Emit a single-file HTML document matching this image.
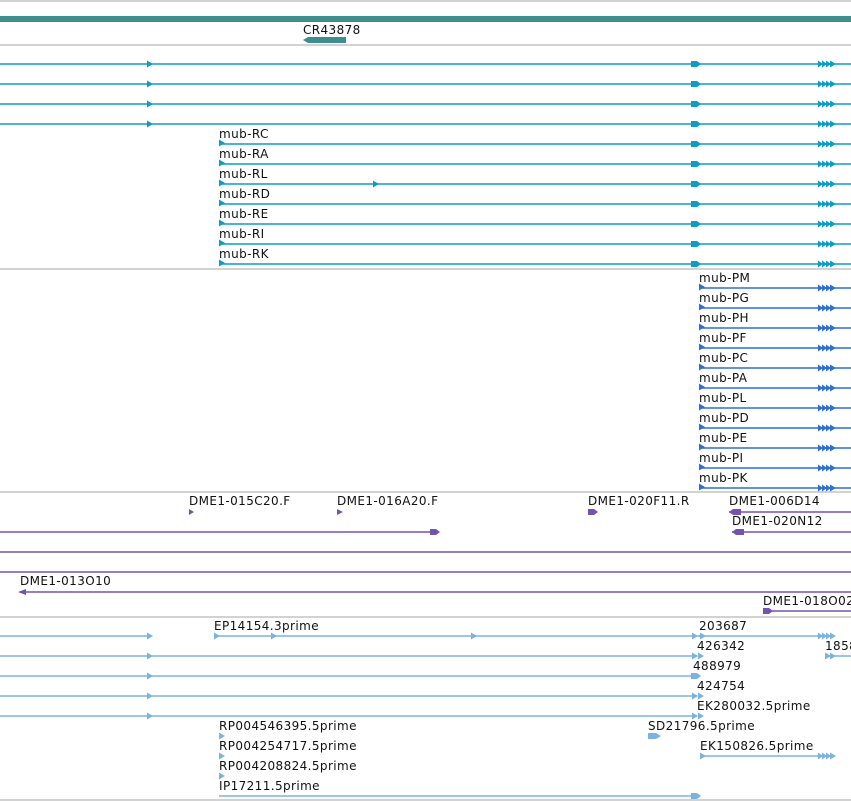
<!DOCTYPE html>
<html><head><meta charset="utf-8"><style>
html,body{margin:0;padding:0;background:#fff;width:851px;height:801px;overflow:hidden}
svg{display:block}
text{font-family:"DejaVu Sans","Liberation Sans",sans-serif;font-size:12px;fill:#111;letter-spacing:0.4px}
</style></head><body>
<svg width="851" height="801" viewBox="0 0 851 801" xmlns="http://www.w3.org/2000/svg">
<defs>
<path id="a" d="M0,-3.5L6,0L0,3.5Z"/>
<g id="ex"><rect x="0" y="-3" width="6" height="6"/><path d="M6,-3L10,0L6,3Z"/></g>
<g id="mu"><path d="M0,-3.5L5,0L0,3.5ZM4,-3.5L9,0L4,3.5ZM8,-3.5L13,0L8,3.5ZM12,-3.5L18,0L12,3.5Z"/></g>
</defs>
<g stroke="#c4c4c4" stroke-width="1.5">
<line x1="0" y1="1" x2="851" y2="1"/><line x1="0" y1="45" x2="851" y2="45"/>
<line x1="0" y1="269" x2="851" y2="269"/><line x1="0" y1="492" x2="851" y2="492"/>
<line x1="0" y1="617" x2="851" y2="617"/><line x1="0" y1="800" x2="851" y2="800"/>
</g>
<rect x="0" y="16" width="851" height="6" fill="#3f8e8e"/>
<text x="303" y="34">CR43878</text>
<path d="M303,40L308,37H346V43H308Z" fill="#3f8e8e"/>

<g fill="#0f9cc4" stroke="#0f9cc4">
<g stroke-width="1.5">
<line x1="0" y1="64" x2="851" y2="64"/><line x1="0" y1="84" x2="851" y2="84"/>
<line x1="0" y1="104" x2="851" y2="104"/><line x1="0" y1="124" x2="851" y2="124"/>
<line x1="219" y1="144" x2="851" y2="144"/><line x1="219" y1="164" x2="851" y2="164"/>
<line x1="219" y1="184" x2="851" y2="184"/><line x1="219" y1="204" x2="851" y2="204"/>
<line x1="219" y1="224" x2="851" y2="224"/><line x1="219" y1="244" x2="851" y2="244"/>
<line x1="219" y1="264" x2="851" y2="264"/>
</g>
<g stroke="none">
<use href="#a" x="147" y="64"/><use href="#a" x="147" y="84"/><use href="#a" x="147" y="104"/><use href="#a" x="147" y="124"/>
<use href="#a" x="373" y="184"/>
<use href="#a" x="219" y="143"/><use href="#a" x="219" y="163"/><use href="#a" x="219" y="183"/><use href="#a" x="219" y="203"/><use href="#a" x="219" y="223"/><use href="#a" x="219" y="243"/><use href="#a" x="219" y="263"/>
<use href="#ex" x="691" y="64"/><use href="#ex" x="691" y="84"/><use href="#ex" x="691" y="104"/><use href="#ex" x="691" y="124"/>
<use href="#ex" x="691" y="144"/><use href="#ex" x="691" y="164"/><use href="#ex" x="691" y="184"/><use href="#ex" x="691" y="204"/><use href="#ex" x="691" y="224"/><use href="#ex" x="691" y="244"/><use href="#ex" x="691" y="264"/>
<use href="#mu" x="818" y="64"/><use href="#mu" x="818" y="84"/><use href="#mu" x="818" y="104"/><use href="#mu" x="818" y="124"/>
<use href="#mu" x="818" y="144"/><use href="#mu" x="818" y="164"/><use href="#mu" x="818" y="184"/><use href="#mu" x="818" y="204"/><use href="#mu" x="818" y="224"/><use href="#mu" x="818" y="244"/><use href="#mu" x="818" y="264"/>
</g></g>
<text x="219" y="138">mub-RC</text><text x="219" y="158">mub-RA</text><text x="219" y="178">mub-RL</text><text x="219" y="198">mub-RD</text><text x="219" y="218">mub-RE</text><text x="219" y="238">mub-RI</text><text x="219" y="258">mub-RK</text>

<g fill="#2f6fd0" stroke="#2f6fd0">
<g stroke-width="1.5">
<line x1="699" y1="288" x2="851" y2="288"/><line x1="699" y1="308" x2="851" y2="308"/><line x1="699" y1="328" x2="851" y2="328"/><line x1="699" y1="348" x2="851" y2="348"/><line x1="699" y1="368" x2="851" y2="368"/><line x1="699" y1="388" x2="851" y2="388"/><line x1="699" y1="408" x2="851" y2="408"/><line x1="699" y1="428" x2="851" y2="428"/><line x1="699" y1="448" x2="851" y2="448"/><line x1="699" y1="468" x2="851" y2="468"/><line x1="699" y1="488" x2="851" y2="488"/>
</g>
<g stroke="none">
<use href="#a" x="699" y="287"/><use href="#a" x="699" y="307"/><use href="#a" x="699" y="327"/><use href="#a" x="699" y="347"/><use href="#a" x="699" y="367"/><use href="#a" x="699" y="387"/><use href="#a" x="699" y="407"/><use href="#a" x="699" y="427"/><use href="#a" x="699" y="447"/><use href="#a" x="699" y="467"/><use href="#a" x="699" y="487"/>
<use href="#mu" x="818" y="288"/><use href="#mu" x="818" y="308"/><use href="#mu" x="818" y="328"/><use href="#mu" x="818" y="348"/><use href="#mu" x="818" y="368"/><use href="#mu" x="818" y="388"/><use href="#mu" x="818" y="408"/><use href="#mu" x="818" y="428"/><use href="#mu" x="818" y="448"/><use href="#mu" x="818" y="468"/><use href="#mu" x="818" y="488"/>
</g></g>
<text x="699" y="282">mub-PM</text><text x="699" y="302">mub-PG</text><text x="699" y="322">mub-PH</text><text x="699" y="342">mub-PF</text><text x="699" y="362">mub-PC</text><text x="699" y="382">mub-PA</text><text x="699" y="402">mub-PL</text><text x="699" y="422">mub-PD</text><text x="699" y="442">mub-PE</text><text x="699" y="462">mub-PI</text><text x="699" y="482">mub-PK</text>

<g fill="#7352b0" stroke="#7352b0">
<g stroke-width="1.5">
<line x1="729" y1="512" x2="851" y2="512"/>
<line x1="0" y1="532" x2="432" y2="532"/><line x1="732" y1="532" x2="851" y2="532"/>
<line x1="0" y1="552" x2="851" y2="552"/><line x1="0" y1="572" x2="851" y2="572"/>
<line x1="20" y1="592" x2="851" y2="592"/><line x1="763" y1="611" x2="851" y2="611"/>
</g>
<g stroke="none">
<path d="M189,509L194,512L189,515Z"/><path d="M337,509L343,512L337,515Z"/>
<path d="M588,509H594L598,512L594,515H588Z"/>
<path d="M729,512L733,509H741V515H733Z"/><path d="M732,532L736,529H744V535H736Z"/>
<path d="M430,529H436L440,532L436,535H430Z"/>
<path d="M18,592L26,589V595Z"/>
<path d="M763,608H769L773,611L769,614H763Z"/>
</g></g>
<text x="189" y="505">DME1-015C20.F</text><text x="337" y="505">DME1-016A20.F</text><text x="588" y="505">DME1-020F11.R</text>
<text x="729" y="505">DME1-006D14</text><text x="732" y="525">DME1-020N12</text>
<text x="20" y="585">DME1-013O10</text><text x="763" y="605">DME1-018O02</text>

<g fill="#7ab3e0" stroke="#7ab3e0">
<g stroke-width="1.5">
<line x1="0" y1="636" x2="150" y2="636"/><line x1="214" y1="636" x2="700" y2="636"/><line x1="699" y1="636" x2="830" y2="636"/>
<line x1="0" y1="656" x2="697" y2="656"/><line x1="825" y1="656" x2="851" y2="656"/>
<line x1="0" y1="676" x2="697" y2="676"/><line x1="0" y1="696" x2="697" y2="696"/><line x1="0" y1="716" x2="697" y2="716"/>
<line x1="700" y1="756" x2="830" y2="756"/><line x1="219" y1="796" x2="700" y2="796"/>
</g>
<g stroke="none">
<use href="#a" x="147" y="636"/><use href="#a" x="147" y="656"/><use href="#a" x="147" y="676"/><use href="#a" x="147" y="696"/><use href="#a" x="147" y="716"/>
<use href="#a" x="214" y="636"/><use href="#a" x="271" y="636"/><use href="#a" x="471" y="636"/><use href="#a" x="692" y="636"/><use href="#a" x="700" y="636"/><use href="#mu" x="818" y="636"/>
<use href="#a" x="692" y="656"/><use href="#a" x="698" y="656"/><use href="#a" x="825" y="656"/><use href="#a" x="830" y="656"/>
<use href="#ex" x="691" y="676"/><use href="#a" x="692" y="696"/><use href="#a" x="698" y="696"/><use href="#a" x="692" y="716"/><use href="#a" x="698" y="716"/>
<path d="M648,733H656L661,736L656,739H648Z"/>
<use href="#a" x="219" y="736"/><use href="#a" x="219" y="756"/><use href="#a" x="219" y="776"/>
<use href="#a" x="700" y="756"/><use href="#mu" x="818" y="756"/>
<use href="#ex" x="691" y="796"/>
</g></g>
<text x="214" y="630">EP14154.3prime</text><text x="699" y="630">203687</text>
<text x="697" y="650">426342</text><text x="825" y="650">1858</text>
<text x="693" y="670">488979</text><text x="697" y="690">424754</text><text x="697" y="710">EK280032.5prime</text>
<text x="648" y="730">SD21796.5prime</text><text x="219" y="730">RP004546395.5prime</text>
<text x="219" y="750">RP004254717.5prime</text><text x="700" y="750">EK150826.5prime</text>
<text x="219" y="770">RP004208824.5prime</text><text x="219" y="790">IP17211.5prime</text>
</svg>
</body></html>
